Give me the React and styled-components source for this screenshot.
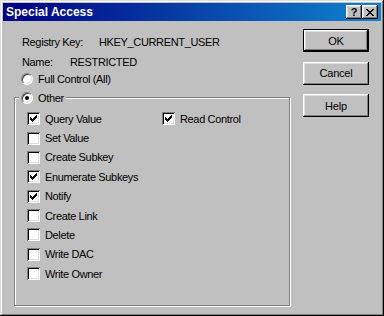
import React from 'react';
import styled, { createGlobalStyle } from 'styled-components';

const Global = createGlobalStyle`
  html, body { margin: 0; padding: 0; background: #c0c0c0; }
  body { font-family: "Liberation Sans", Arial, sans-serif; font-size: 11px; color: #000; }
  * { box-sizing: border-box; }
`;

const Window = styled.div`
  width: 384px;
  height: 316px;
  padding: 3px;
  background: #c0c0c0;
  box-shadow: inset -1px -1px #000, inset 1px 1px #dfdfdf, inset -2px -2px #808080, inset 2px 2px #fff;
  display: flex;
  flex-direction: column;
`;

const TitleBar = styled.div`
  height: 18px;
  flex: none;
  display: flex;
  align-items: center;
  padding: 0 3px;
  background: linear-gradient(to right, #000080, #1084d0);
`;

const Title = styled.span`
  flex: 1;
  color: #fff;
  font-weight: bold;
  font-size: 12px;
  line-height: 18px;
  white-space: nowrap;
`;

const TitleButton = styled.button`
  width: 16px;
  height: 14px;
  padding: 0;
  border: 0;
  background: #c0c0c0;
  box-shadow: inset -1px -1px #000, inset 1px 1px #fff, inset -2px -2px #808080, inset 2px 2px #dfdfdf;
  display: flex;
  align-items: center;
  justify-content: center;
  font: bold 11px "Liberation Sans", Arial, sans-serif;
  color: #000;
  line-height: 1;
`;

const Body = styled.div`
  flex: 1;
  display: flex;
  gap: 13px;
  padding: 8px 0 0 11px;
`;

const LeftColumn = styled.div`
  width: 276px;
  display: flex;
  flex-direction: column;
  padding-top: 3px;
`;

const InfoRow = styled.div`
  height: 20px;
  display: flex;
  align-items: center;
  padding-left: 8px;
  letter-spacing: -0.35px;
  white-space: nowrap;
`;

const InfoLabel = styled.span`
  flex: none;
  width: ${p => p.$w}px;
`;

const RadioRow = styled.label`
  height: 14px;
  display: flex;
  align-items: center;
  gap: 5px;
  padding-left: 7px;
  letter-spacing: -0.35px;
  white-space: nowrap;
`;

const Radio = styled.span`
  flex: none;
  width: 12px;
  height: 12px;
  border-radius: 50%;
  background: #fff;
  border: 1px solid;
  border-color: #808080 #fff #fff #808080;
  box-shadow: inset 1px 1px #404040, inset -1px -1px #dfdfdf;
  display: flex;
  align-items: center;
  justify-content: center;
  &::after {
    content: '';
    display: ${p => (p.$on ? 'block' : 'none')};
    width: 4px;
    height: 4px;
    border-radius: 50%;
    background: #000;
  }
`;

const Group = styled.fieldset`
  margin: 5px 0 0 0;
  padding: 5px 0 0 4px;
  height: 215px;
  min-width: 0;
  border: 1px solid #808080;
  box-shadow: inset 1px 1px #fff, 1px 1px #fff;
`;

const Legend = styled.legend`
  padding: 0 2px;
  height: 13px;
  display: flex;
  align-items: center;
  gap: 5px;
  background: #c0c0c0;
  letter-spacing: -0.35px;
`;

const CheckGrid = styled.div`
  display: grid;
  grid-template-columns: 135px auto;
  grid-template-rows: repeat(9, 19.375px);
  grid-auto-flow: column;
  padding-left: 8px;
`;

const CheckRow = styled.label`
  display: flex;
  align-items: center;
  gap: 5px;
  letter-spacing: -0.35px;
  white-space: nowrap;
`;

const Box = styled.span`
  flex: none;
  width: 13px;
  height: 13px;
  background: #fff;
  box-shadow: inset 1px 1px #808080, inset -1px -1px #fff, inset 2px 2px #000, inset -2px -2px #dfdfdf;
  display: flex;
  align-items: center;
  justify-content: center;
`;

const ButtonColumn = styled.div`
  width: 66px;
  display: flex;
  flex-direction: column;
  gap: 9.5px;
`;

const Button = styled.button`
  width: 66px;
  height: 23px;
  padding: 0;
  border: 0;
  background: #c0c0c0;
  color: #000;
  font: 11px "Liberation Sans", Arial, sans-serif;
  letter-spacing: -0.2px;
  box-shadow: ${p =>
    p.$default
      ? 'inset 0 0 0 1px #000, inset -2px -2px #000, inset 2px 2px #fff, inset -3px -3px #808080, inset 3px 3px #dfdfdf'
      : 'inset -1px -1px #000, inset 1px 1px #fff, inset -2px -2px #808080, inset 2px 2px #dfdfdf'};
`;

const PixelIcon = ({ rows }) => {
  const rects = [];
  rows.forEach((r, y) =>
    r.split('').forEach((c, x) => {
      if (c === 'X') rects.push(<rect key={`${x}-${y}`} x={x} y={y} width="1" height="1" />);
    })
  );
  return (
    <svg width={rows[0].length} height={rows.length} viewBox={`0 0 ${rows[0].length} ${rows.length}`} shapeRendering="crispEdges" fill="#000">
      {rects}
    </svg>
  );
};

const CHECK = ['......X', '.....XX', 'X...XXX', 'XX.XXX.', 'XXXXX..', '.XXX...', '..X....'];
const CLOSE = ['XX....XX', '.XX..XX.', '..XXXX..', '...XX...', '..XXXX..', '.XX..XX.', 'XX....XX'];

const Check = ({ on, children }) => (
  <CheckRow>
    <Box>{on && <PixelIcon rows={CHECK} />}</Box>
    <span>{children}</span>
  </CheckRow>
);

const left = [
  ['Query Value', true],
  ['Set Value', false],
  ['Create Subkey', false],
  ['Enumerate Subkeys', true],
  ['Notify', true],
  ['Create Link', false],
  ['Delete', false],
  ['Write DAC', false],
  ['Write Owner', false],
];

export default function App() {
  return (
    <>
      <Global />
      <Window>
        <TitleBar>
          <Title>Special Access</Title>
          <TitleButton>?</TitleButton>
          <TitleButton>
            <PixelIcon rows={CLOSE} />
          </TitleButton>
        </TitleBar>
        <Body>
          <LeftColumn>
            <InfoRow>
              <InfoLabel $w={77}>Registry Key:</InfoLabel>
              <span>HKEY_CURRENT_USER</span>
            </InfoRow>
            <InfoRow>
              <InfoLabel $w={48}>Name:</InfoLabel>
              <span>RESTRICTED</span>
            </InfoRow>
            <RadioRow>
              <Radio />
              <span>Full Control (All)</span>
            </RadioRow>
            <Group>
              <Legend>
                <Radio $on />
                <span>Other</span>
              </Legend>
              <CheckGrid>
                {left.map(([t, on]) => (
                  <Check key={t} on={on}>{t}</Check>
                ))}
                <Check on>Read Control</Check>
              </CheckGrid>
            </Group>
          </LeftColumn>
          <ButtonColumn>
            <Button $default>OK</Button>
            <Button>Cancel</Button>
            <Button>Help</Button>
          </ButtonColumn>
        </Body>
      </Window>
    </>
  );
}
